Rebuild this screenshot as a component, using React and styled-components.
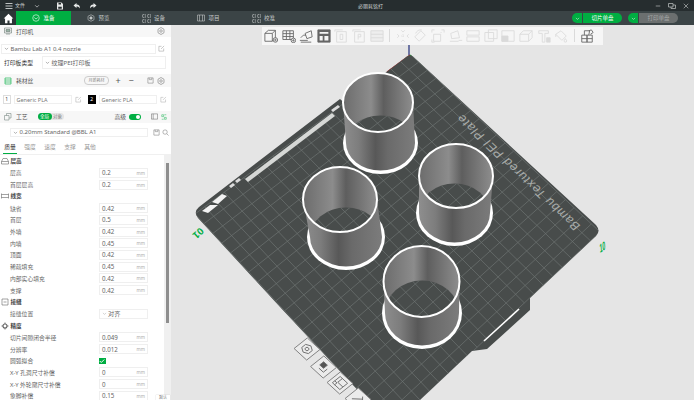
import React from "react";
import styled, { createGlobalStyle } from "styled-components";

const GlobalStyle = createGlobalStyle`
    html, body { margin: 0; padding: 0; background: #e5e5e5; }
    body { font-family: "Noto Sans", "Noto Sans CJK SC", sans-serif; }
    * { box-sizing: border-box; }
`;

// small icons
const Svg = ({ size = 8, vb = 16, children, ...rest }) => (
    <svg width={size} height={size} viewBox={`0 0 ${vb} ${vb}`} fill="none" stroke="currentColor" strokeWidth="1.2" {...rest}>{children}</svg>
);
const MenuIcon = () => <Svg size={8}><path d="M1 3h14M1 8h14M1 13h14" strokeWidth="1.6" /></Svg>;
const Chevron = ({ size = 6 }) => <Svg size={size}><path d="M3 6l5 5 5-5" strokeWidth="1.6" /></Svg>;
const SaveIcon = () => <Svg size={8}><path d="M2 1h9l3 3v11H2z" fill="currentColor" stroke="none" /><path d="M5 2h5v3H5zM4.500 9.500h7v4h-7z" fill="#262d2f" stroke="none" /></Svg>;
const UndoIcon = ({ flip }) => <Svg size={8} style={flip ? { transform: "scaleX(-1)" } : undefined}><path d="M7 2L1 7l6 5V9c3 0 5 1 7 4 0-5-2-8-7-8z" fill="currentColor" stroke="none" /></Svg>;
const HomeIcon = () => <Svg size={11}><path d="M8 1L1 8h2v7h3.500v-4h3v4H13V8h2z" fill="currentColor" stroke="none" /></Svg>;
const PrepareIcon = () => <Svg size={8}><circle cx="8" cy="8" r="6.500" /><path d="M4.500 7l3.500 3 3.500-3" /></Svg>;
const PreviewIcon = () => <Svg size={8}><path d="M8 1.500l6 3v7l-6 3-6-3v-7z" /><circle cx="8" cy="8" r="2.500" fill="currentColor" /></Svg>;
const DeviceIcon = () => <Svg size={9}><path d="M1 1h5v5H1zM10 1h5v5h-5zM1 10h5v5H1zM10 10h5v5h-5z" strokeDasharray="3 1" /></Svg>;
const ProjectIcon = () => <Svg size={8}><path d="M1 2h14v12H1zM5 2v12M11 2v12" /></Svg>;
const MinIcon = () => <Svg size={6}><path d="M2 8h12" strokeWidth="1.8" /></Svg>;
const RestoreIcon = () => <Svg size={8}><path d="M1 3h9v7H1zM6 10v3h9V6h-5" strokeWidth="1.5" /></Svg>;
const CloseIcon = () => <Svg size={6}><path d="M2 2l12 12M14 2L2 14" strokeWidth="1.8" /></Svg>;
const GearIcon = () => <Svg size={8}><path d="M8 1l6 3.500v7L8 15l-6-3.500v-7z" /><circle cx="8" cy="8" r="2.500" /></Svg>;
const EditIcon = () => <Svg size={7}><path d="M13 8v6H2V3h6" /><path d="M7 9l7-7" /></Svg>;
const PrinterIcon = () => <Svg size={8} stroke="#6a7a72"><path d="M1 2h14v10H1zM4 14h8" /><path d="M4 5h8v4H4z" fill="#9bb3a6" /></Svg>;
const SpoolIcon = () => <Svg size={8} stroke="#00ae42"><path d="M2 2h12v12H2z" /><path d="M2 6h12M2 10h12" /></Svg>;
const CubesIcon = () => <Svg size={8} stroke="#7b8a84"><path d="M1 5h9v9H1zM5 5V1h9v9h-4" /></Svg>;
const NoteIcon = () => <Svg size={7} stroke="#666"><path d="M1 2h14v12H1zM5 2v12" /></Svg>;
const CompareIcon = () => <Svg size={6} stroke="#00ae42"><path d="M2 2h5v5H2zM9 9h5v5H9zM9 2h5M2 14h5" /></Svg>;
const DiskIcon = () => <Svg size={7}><path d="M2 2h12v12H2zM5 2v4h6V2" /></Svg>;
const SearchIcon = () => <Svg size={7}><circle cx="7" cy="7" r="5" /><path d="M11 11l4 4" /></Svg>;
const LayerIcon = () => <Svg size={8}><path d="M1 14h14M1 9l3-6h8l3 6zM1 9v5M15 9v5" /></Svg>;
const WidthIcon = () => <Svg size={8}><path d="M1 5h14M1 11h14M1 3v10M15 3v10" /></Svg>;
const SeamIcon = () => <Svg size={8}><path d="M2 2h12v12H2zM5 8h6" /></Svg>;
const PrecisionIcon = () => <Svg size={8}><circle cx="8" cy="8" r="4" strokeWidth="2.200" /><path d="M8 1v3M8 12v3M1 8h3M12 8h3" strokeWidth="1.800" /></Svg>;

// toolbar glyphs on a 16 box
const plus = (x, y) => <g><circle cx={x} cy={y} r="2.600" fill="#f6f6f6" /><path d={`M${x - 1.500} ${y}h3M${x} ${y - 1.500}v3`} strokeWidth=".8" /></g>;
const toolGlyphs = {
    cube: <><path d="M1 5l4-3.500h8V10l-3.500 4H1zM1 5h8.500v9M9.500 5L13 1.500" />{plus(13, 12.500)}</>,
    grid: <><path d="M1 2h12v10H1zM1 5.300h12M1 8.600h12M5 2v10M9 2v10" />{plus(13, 13)}</>,
    arrange: <path d="M1 13h9M2 15h12M2 10l3-3h3M7 5l7-3 1 7-6 2z" />,
    layout: <><path d="M1 1h14v14H1z" fill="currentColor" /><path d="M3 3.500h10v2H3zM3 8h3.500v5H3zM8.500 8H13v5H8.500z" fill="#f6f6f6" stroke="none" /></>,
    zero: <><path d="M1 3V1h9M3 3h11v12H3z" /><path d="M7 6h3v6H7z" /></>,
    letterP: <><path d="M1 3V1h9M3 3h11v12H3z" /><path d="M7 12V6h3v3H7" /></>,
    stack: <path d="M1 2h14v12H1zM1 6h14M1 10h14" fill="currentColor" fillOpacity=".3" />,
    move: <><path d="M8 3.500l-2-2M8 3.500l2-2M8 12.500l-2 2M8 12.500l2 2M3.500 8l-2-2M3.500 8l-2 2M12.500 8l2-2M12.500 8l2 2" /><path d="M6 8h4M8 6v4" strokeDasharray="1 1" /></>,
    rotate: <><path d="M2 9l7-7 5 5-7 7zM3 5a7 7 0 0 1 7-4" /></>,
    scale: <><path d="M1 4V1h3M12 1h3v3M1 12v3h3M3 6h8v8H3zM11 4h1" /></>,
    flatten: <path d="M1 14h10M3 11l-1-6 8-3 2 8zM11 13h4" />,
    cut: <path d="M1 2h14v5H1zM1 9h14v5H1z" />,
    boolean: <path d="M1 4h10v10H1zM5 1h10v10H5z" />,
    subtract: <><path d="M1 2h14v12H1z" /><path d="M1 8h7v6H1z" fill="currentColor" /></>,
    box: <path d="M1 6l4-4h10v8l-4 4H1zM1 6h10v8M11 6l4-4" />,
    text: <><path d="M2 2h11v3H9v10H6V5H2z" /><path d="M11 10h4v5h-4z" fill="currentColor" /></>,
    bucket: <path d="M2 6l6-4 6 6-5 5zM2 6v3M13 11l1.500 2.500a1.500 1.500 0 1 1-3 0z" />,
    assembly: <path d="M2 7h6v8H2zM8 7h6v8H8zM2 11h12M5 7V2h6l-1 5M10 2l3-1 2 3-3 2" />,
};

const tools = [
    ["cube", 1], ["grid", 1], ["arrange", 1], ["layout", 1], ["zero"], ["letterP"], ["stack"], "sep",
    ["move"], ["rotate"], ["scale"], ["flatten"], ["cut"], ["boolean"], ["subtract"], ["box"], ["text"], ["bucket"], "sep", ["assembly", 1],
];

const tabs = [
    { name: "准备", icon: <PrepareIcon />, active: true },
    { name: "预览", icon: <PreviewIcon /> },
    { name: "设备", icon: <DeviceIcon /> },
    { name: "项目", icon: <ProjectIcon /> },
    { name: "校准", icon: <DeviceIcon /> },
];

const params = [
    { title: "层高", icon: <LayerIcon />, rows: [["层高", "0.2"], ["首层层高", "0.2"]] },
    {
        title: "线宽", icon: <WidthIcon />, rows: [["缺省", "0.42"], ["首层", "0.5"], ["外墙", "0.42"], ["内墙", "0.45"], ["顶面", "0.42"], ["稀疏填充", "0.45"], ["内部实心填充", "0.42"], ["支撑", "0.42"]],
    },
    { title: "接缝", icon: <SeamIcon />, rows: [["接缝位置", "对齐", "select"]] },
    {
        title: "精度", icon: <PrecisionIcon />, rows: [["切片间隙闭合半径", "0.049"], ["分辨率", "0.012"], ["圆弧拟合", "", "check"], ["X-Y 孔洞尺寸补偿", "0"], ["X-Y 外轮廓尺寸补偿", "0"], ["象脚补偿", "0.15"]],
    },
];

// plate geometry, page coordinates
const T = [410, 54], R = [600, 232], B = [392, 427], L = [195, 214];
const CELLS = 22;
const lerp = (a, b, t) => [a[0] + (b[0] - a[0]) * t, a[1] + (b[1] - a[1]) * t];

function gridLines() {
    const lines = [];
    for (let i = 0; i <= CELLS; i++) {
        const t = i / CELLS;
        const a = lerp(T, R, t), b = lerp(L, B, t);
        const c = lerp(T, L, t), d = lerp(R, B, t);
        lines.push(`M${a[0]} ${a[1]}L${b[0]} ${b[1]}`, `M${c[0]} ${c[1]}L${d[0]} ${d[1]}`);
    }
    return lines.join("");
}

const PLATE = "M407 56.500Q410 54 413 56.500L596 225Q601 231 596 236L530 298V310L487 349L472 351L420 400L392 427L367 400L280 307L198 218Q193 212 199 207L340 99L345 103.500Z";

const parts = [
    { id: "a", top: [378, 102.5, 35, 29.5], base: [380.5, 143, 37.5, 31] },
    { id: "c", top: [456, 176, 37, 32], base: [454.5, 213, 38.5, 33] },
    { id: "b", top: [340, 199.5, 37, 32.5], base: [346, 237, 39, 33] },
    { id: "d", top: [421.5, 281.5, 38, 35.5], base: [422, 313, 40, 36] },
];

function Cylinder({ top, base, id }) {
    const [tx, ty, trx, try_] = top;
    const [bx, by, brx, bry] = base;
    const rx = brx - 3, ry = bry - 3.5;
    return (
        <g>
            <ellipse cx={bx} cy={by} rx={brx} ry={bry} fill="#fff" />
            <path d={`M${tx - trx} ${ty}L${bx - rx} ${by}A${rx} ${ry} 0 0 0 ${bx + rx} ${by}L${tx + trx} ${ty}Z`} fill="url(#outerWall)" />
            <clipPath id={`inner-${id}`}><ellipse cx={tx} cy={ty} rx={trx} ry={try_} /></clipPath>
            <g clipPath={`url(#inner-${id})`}>
                <ellipse cx={tx} cy={ty} rx={trx} ry={try_} fill="url(#innerWall)" />
                <ellipse cx={bx} cy={by} rx={rx} ry={ry} fill="#484c4b" />
                <clipPath id={`floor-${id}`}><ellipse cx={bx} cy={by} rx={rx} ry={ry} /></clipPath>
                <path d={gridLines()} stroke="#6f7473" strokeWidth=".7" clipPath={`url(#floor-${id})`} />
            </g>
            <ellipse cx={tx} cy={ty} rx={trx} ry={try_} stroke="#fff" strokeWidth="2" fill="none" />
        </g>
    );
}

// little tilted buttons along the plate edge
function EdgeButton({ x, y, children }) {
    return (
        <g transform={`translate(${x} ${y}) matrix(.74 .68 -.78 .62 0 0)`}>
            <rect x="-8.500" y="-8.500" width="17" height="17" fill="#ebebeb" stroke="#808080" strokeWidth=".9" />
            <g stroke="#707070" strokeWidth=".9" fill="none">{children}</g>
        </g>
    );
}

function PlateScene() {
    return (
        <Scene viewBox="171 25 523 375">
            <defs>
                <linearGradient id="outerWall" x1="0" x2="1" y1="0" y2="0">
                    <stop offset="0" stopColor="#8e8e8e" />
                    <stop offset=".22" stopColor="#7d7d7d" />
                    <stop offset=".45" stopColor="#585858" />
                    <stop offset=".62" stopColor="#6a6a6a" />
                    <stop offset="1" stopColor="#7c7c7c" />
                </linearGradient>
                <linearGradient id="innerWall" x1="0" x2="1" y1="0" y2="0">
                    <stop offset="0" stopColor="#6c6c6c" />
                    <stop offset=".4" stopColor="#8c8c8c" />
                    <stop offset=".58" stopColor="#5e5e5e" />
                    <stop offset="1" stopColor="#8e8e8e" />
                </linearGradient>
                <clipPath id="plateClip"><path d={PLATE} /></clipPath>
            </defs>

            <path d="M409 55V40" stroke="#1e2a78" strokeWidth="1.200" />
            <path d="M410 55L387 72" stroke="#b01c1c" strokeWidth="1.200" />
            <path d="M410 55L430 74" stroke="#18b030" strokeWidth="1.200" />

            <path d={PLATE} fill="#484c4b" />
            <path d={gridLines()} stroke="#6f7473" strokeWidth=".7" clipPath="url(#plateClip)" />

            <path d="M245 179L332 113L335 116L248 182Z" fill="#d6d8d6" />
            <path d="M202 211L210 205L218 205L208 213Z" fill="#f2f2f2" />
            <path d="M212 202L222 194L227 196L218 204Z" fill="#f2f2f2" />
            <path d="M229 186l4-3 2 2-4 3zM235 181l4-3 2 2-4 3zM331 110l7-5 2 2-7 5z" fill="#dcdcdc" />
            <path d="M484 341L519 309" stroke="#fff" strokeWidth="1.600" fill="none" />

            <PlateLabel transform="matrix(-.72 -.68 .8 -.6 581 226)">Bambu Textured PEI Plate</PlateLabel>
            <AxisLabel transform="matrix(-.74 .66 -.66 -.74 200 227)">01</AxisLabel>
            <AxisLabel transform="matrix(.5 -.35 .1 1.200 600 253)">10</AxisLabel>

            {parts.map(p => <Cylinder key={p.id} {...p} />)}

            <EdgeButton x={307} y={349}>
                <path d="M0-5l4.500 2.500v5L0 5l-4.500-2.500v-5z" />
                <circle r="1.800" />
            </EdgeButton>
            <EdgeButton x={323.500} y={367}>
                <path d="M-4-4h5v5h-5z" fill="#555" />
                <path d="M4-1v5h-6" />
            </EdgeButton>
            <EdgeButton x={340} y={383}>
                <path d="M-5-5H5V5H-5zM-2-5v6h7M-5 2h3v3" />
            </EdgeButton>
            <EdgeButton x={358} y={399}>
                <path d="M-4 4L3-3M1-5l4 4" />
            </EdgeButton>
        </Scene>
    );
}

function App() {
    return (
        <Page>
            <GlobalStyle />
            <TitleBar>
                <TitleGroup>
                    <TitleIcon><MenuIcon /></TitleIcon>
                    <FileLabel>文件</FileLabel>
                    <TitleIcon $gap={9}><Chevron /></TitleIcon>
                    <TitleIcon $gap={16}><SaveIcon /></TitleIcon>
                    <TitleIcon $gap={9}><UndoIcon /></TitleIcon>
                    <TitleIcon $gap={8}><UndoIcon flip /></TitleIcon>
                </TitleGroup>
                <FileName>必丽耗铭打</FileName>
                <WindowButtons>
                    <MinIcon />
                    <RestoreIcon />
                    <CloseIcon />
                </WindowButtons>
            </TitleBar>

            <TabBar>
                <HomeButton><HomeIcon /></HomeButton>
                {tabs.map(t => <Tab key={t.name} $active={t.active}>{t.icon}{t.name}</Tab>)}
                <TabSpacer />
                <ActionButton>
                    <ActionArrow><Chevron size={5} /></ActionArrow>
                    <ActionLabel>切片单盘</ActionLabel>
                </ActionButton>
                <ActionButton>
                    <ActionArrow><Chevron size={5} /></ActionArrow>
                    <ActionLabel $disabled>打印单盘</ActionLabel>
                </ActionButton>
            </TabBar>

            <Workspace>
                <Sidebar>
                    <SectionHeader>
                        <PrinterIcon />
                        <SectionTitle>打印机</SectionTitle>
                        <HeaderSpacer />
                        <GearIcon />
                    </SectionHeader>
                    <PrinterBody>
                        <FieldRow>
                            <SelectBox $width={155}><Chevron size={5} />Bambu Lab A1 0.4 nozzle</SelectBox>
                            <EditIcon />
                        </FieldRow>
                        <PlateRow>
                            <PlateTypeLabel>打印板类型</PlateTypeLabel>
                            <SelectBox $width={124} $height={13}><Chevron size={5} />纹理PEI打印板</SelectBox>
                        </PlateRow>
                    </PrinterBody>

                    <SectionHeader $height={13}>
                        <SpoolIcon />
                        <SectionTitle>耗材丝</SectionTitle>
                        <HeaderSpacer />
                        <SyncPill>月新耗材</SyncPill>
                        <HeaderGlyph $after={2}>+</HeaderGlyph>
                        <HeaderGlyph $after={9}>−</HeaderGlyph>
                        <DiskIcon />
                        <GearIcon />
                    </SectionHeader>
                    <FilamentRow>
                        <Filament>
                            <Swatch>1</Swatch>
                            <FilamentName>Generic PLA</FilamentName>
                            <EditIcon />
                        </Filament>
                        <Filament>
                            <Swatch $dark>2</Swatch>
                            <FilamentName>Generic PLA</FilamentName>
                            <EditIcon />
                        </Filament>
                    </FilamentRow>

                    <SectionHeader $height={11.500} $tight>
                        <CubesIcon />
                        <SectionTitle>工艺</SectionTitle>
                        <ScopeSwitch>
                            <ScopeOption $on>全局</ScopeOption>
                            <ScopeOption>对象</ScopeOption>
                        </ScopeSwitch>
                        <HeaderSpacer />
                        <AdvancedLabel>高级</AdvancedLabel>
                        <Toggle />
                        <NoteIcon />
                        <CompareIcon />
                    </SectionHeader>
                    <ProcessRow>
                        <SelectBox $width={138} $after={3}><Chevron size={5} />0.20mm Standard @BBL A1</SelectBox>
                        <DiskIcon />
                        <SearchIcon />
                    </ProcessRow>
                    <ParamTabs>
                        <ParamTab $active>质量</ParamTab>
                        <ParamTab>强度</ParamTab>
                        <ParamTab>速度</ParamTab>
                        <ParamTab>支撑</ParamTab>
                        <ParamTab>其他</ParamTab>
                    </ParamTabs>
                    <ParamArea>
                        <ParamList>
                            {params.map(group => (
                                <React.Fragment key={group.title}>
                                    <GroupHeader>{group.icon}<span>{group.title}</span></GroupHeader>
                                    {group.rows.map(([label, value, kind]) => (
                                        <ParamRow key={label}>
                                            <ParamLabel>{label}</ParamLabel>
                                            {kind === "check" ? (
                                                <CheckBox><Svg size={6} stroke="#fff"><path d="M2 8l4 4 8-8" strokeWidth="2.500" /></Svg></CheckBox>
                                            ) : kind === "select" ? (
                                                <ParamInput><Chevron size={5} /><ParamValue>{value}</ParamValue></ParamInput>
                                            ) : (
                                                <ParamInput><ParamValue>{value}</ParamValue><ParamUnit>mm</ParamUnit></ParamInput>
                                            )}
                                        </ParamRow>
                                    ))}
                                </React.Fragment>
                            ))}
                        </ParamList>
                        <ScrollTrack><ScrollThumb /></ScrollTrack>
                        <ResetTag>默认</ResetTag>
                    </ParamArea>
                </Sidebar>

                <Canvas>
                    <PlateScene />
                    <Toolbar>
                        {tools.map((tool, i) => tool === "sep" ? <ToolSep key={i} /> : (
                            <ToolIcon key={i} $on={tool[1]} viewBox="0 0 16 16">{toolGlyphs[tool[0]]}</ToolIcon>
                        ))}
                    </Toolbar>
                </Canvas>
            </Workspace>
        </Page>
    );
}

export default App;

const Page = styled.div`
    width: 694px;
    height: 400px;
    overflow: hidden;
    display: flex;
    flex-direction: column;
`;

const TitleBar = styled.div`
    height: 11px;
    flex: none;
    position: relative;
    display: flex;
    align-items: center;
    justify-content: space-between;
    padding: 0 5px;
    background: #262d2f;
    color: #e6e8e8;
`;

const TitleGroup = styled.div`
    display: flex;
    align-items: center;
`;

const TitleIcon = styled.span`
    display: flex;
    margin-left: ${({ $gap }) => $gap || 0}px;
`;

const FileLabel = styled.span`
    margin-left: 2px;
    font-size: 5px;
    line-height: 11px;
    color: #c9cdcd;
`;

const FileName = styled.span`
    position: absolute;
    left: 358px;
    font-size: 5px;
    color: #c9cdcd;
`;

const WindowButtons = styled.div`
    display: flex;
    align-items: center;
    gap: 7px;
    color: #b9bdbd;
`;

const TabBar = styled.div`
    height: 14px;
    flex: none;
    display: flex;
    align-items: stretch;
    background: #3b4446;
    color: #c4c8c8;
`;

const HomeButton = styled.div`
    width: 16px;
    display: flex;
    align-items: center;
    justify-content: center;
    background: #2c3436;
    color: #fff;
`;

const Tab = styled.div`
    width: 55px;
    display: flex;
    align-items: center;
    justify-content: center;
    gap: 3px;
    font-size: 5.500px;
    background: ${({ $active }) => $active ? "#00ae42" : "transparent"};
    color: ${({ $active }) => $active ? "#fff" : "#c4c8c8"};
`;

const TabSpacer = styled.div`
    flex: 1;
`;

const ActionButton = styled.div`
    width: 50px;
    height: 10px;
    margin: auto 16px auto -10px;
    display: flex;
    gap: 1px;
`;

const ActionArrow = styled.div`
    width: 10px;
    display: flex;
    align-items: center;
    justify-content: center;
    border-radius: 5px 0 0 5px;
    background: #00ae42;
    color: #fff;
`;

const ActionLabel = styled.div`
    flex: 1;
    display: flex;
    align-items: center;
    justify-content: center;
    font-size: 5.500px;
    border-radius: 0 5px 5px 0;
    background: ${({ $disabled }) => $disabled ? "#6b6f6f" : "#00ae42"};
    color: ${({ $disabled }) => $disabled ? "#a5a8a8" : "#fff"};
`;

const Workspace = styled.div`
    flex: 1;
    min-height: 0;
    display: flex;
`;

const Sidebar = styled.div`
    width: 171px;
    flex: none;
    display: flex;
    flex-direction: column;
    background: #fff;
    color: #555;
`;

const SectionHeader = styled.div`
    height: ${({ $height }) => $height || 12}px;
    flex: none;
    display: flex;
    align-items: center;
    gap: 3px;
    padding: 0 ${({ $tight }) => $tight ? 4 : 6}px 0 4px;
    background: #f7f7f7;
    color: #777;
`;

const SectionTitle = styled.span`
    margin-left: 1px;
    font-size: 5.800px;
    color: #555;
`;

const HeaderSpacer = styled.div`
    flex: 1;
`;

const HeaderGlyph = styled.span`
    width: 8px;
    margin-right: ${({ $after }) => $after}px;
    text-align: center;
    font-size: 9px;
    line-height: 9px;
    color: #555;
`;

const SyncPill = styled.span`
    width: 25px;
    margin-right: 2px;
    text-align: center;
    font-size: 4px;
    line-height: 7px;
    border: 1px solid #ccc;
    border-radius: 4px;
    color: #888;
`;

const PrinterBody = styled.div`
    height: 37px;
    flex: none;
    padding: 7px 0 0 1px;
    color: #999;
`;

const FieldRow = styled.div`
    display: flex;
    align-items: center;
    gap: 2px;
`;

const PlateRow = styled.div`
    margin-top: 2px;
    padding-left: 3px;
    display: flex;
    align-items: center;
`;

const PlateTypeLabel = styled.span`
    width: 38px;
    font-size: 5.800px;
    color: #333;
`;

const SelectBox = styled.div`
    width: ${({ $width }) => $width}px;
    height: ${({ $height }) => $height || 9.500}px;
    margin-right: ${({ $after }) => $after || 0}px;
    flex: none;
    display: flex;
    align-items: center;
    gap: 1.500px;
    padding-left: 2px;
    font-size: 6px;
    border: 1px solid #efefef;
    color: #666;
`;

const FilamentRow = styled.div`
    height: 24px;
    flex: none;
    display: flex;
    padding: 7.500px 0 0 3px;
    gap: 6px;
    color: #aaa;
`;

const Filament = styled.div`
    width: 79px;
    height: 9.500px;
    display: flex;
    align-items: center;
    gap: 3px;
`;

const Swatch = styled.div`
    width: 7.500px;
    height: 9.500px;
    flex: none;
    display: flex;
    align-items: center;
    justify-content: center;
    font-size: 5px;
    border: 1px solid ${({ $dark }) => $dark ? "#000" : "#ddd"};
    background: ${({ $dark }) => $dark ? "#000" : "#fff"};
    color: ${({ $dark }) => $dark ? "#fff" : "#444"};
`;

const FilamentName = styled.div`
    width: 60px;
    height: 9.500px;
    padding-left: 2px;
    font-size: 5.500px;
    line-height: 8px;
    border: 1px solid #efefef;
    color: #777;
`;

const ScopeSwitch = styled.div`
    margin-left: 7px;
    display: flex;
    border-radius: 4px;
    background: #e4e4e4;
`;

const ScopeOption = styled.span`
    width: ${({ $on }) => $on ? 14 : 12}px;
    text-align: center;
    font-size: 4.500px;
    line-height: 7px;
    border-radius: 4px;
    background: ${({ $on }) => $on ? "#00ae42" : "transparent"};
    color: ${({ $on }) => $on ? "#fff" : "#888"};
`;

const AdvancedLabel = styled.span`
    font-size: 5.800px;
    color: #555;
`;

const Toggle = styled.div`
    position: relative;
    width: 12px;
    height: 6.500px;
    margin-right: 7px;
    border-radius: 4px;
    background: #00ae42;

    &::after {
        content: "";
        position: absolute;
        right: 1px;
        top: 1px;
        width: 4.500px;
        height: 4.500px;
        border-radius: 50%;
        background: #fff;
    }
`;

const ProcessRow = styled.div`
    height: 16.500px;
    flex: none;
    display: flex;
    align-items: center;
    gap: 2px;
    padding: 3px 0 0 10px;
    color: #777;
`;

const ParamTabs = styled.div`
    height: 15.500px;
    flex: none;
    display: flex;
    gap: 6px;
    padding: 4px 0 0 3px;
    border-bottom: 1px solid #f0f0f0;
`;

const ParamTab = styled.div`
    width: 14px;
    height: 10.500px;
    text-align: center;
    font-size: 5.800px;
    line-height: 9px;
    border-bottom: 1px solid ${({ $active }) => $active ? "#00ae42" : "transparent"};
    color: ${({ $active }) => $active ? "#333" : "#999"};
`;

const ParamArea = styled.div`
    position: relative;
    flex: 1;
    min-height: 0;
    display: flex;
    overflow: hidden;
`;

const ParamList = styled.div`
    width: 164px;
    flex: none;
    padding-top: .500px;
`;

const GroupHeader = styled.div`
    height: 12px;
    display: flex;
    align-items: center;
    gap: 1.500px;
    padding-left: 1px;
    font-size: 5.600px;
    font-weight: 700;
    color: #444;

    & > svg {
        color: #666;
    }
`;

const ParamRow = styled.div`
    height: 11.700px;
    display: flex;
    align-items: center;
    padding-left: 10px;
`;

const ParamLabel = styled.span`
    width: 89px;
    font-size: 5.800px;
    white-space: nowrap;
    color: #666;
`;

const ParamInput = styled.div`
    width: 49px;
    height: 10px;
    display: flex;
    align-items: center;
    gap: 1px;
    padding: 0 2px;
    border: 1px solid #efefef;
    color: #aaa;
`;

const ParamValue = styled.span`
    flex: 1;
    font-size: 6.200px;
    color: #666;
`;

const ParamUnit = styled.span`
    font-size: 4.500px;
    color: #aaa;
`;

const CheckBox = styled.div`
    width: 6.500px;
    height: 6.500px;
    display: flex;
    align-items: center;
    justify-content: center;
    background: #00ae42;
`;

const ScrollTrack = styled.div`
    flex: 1;
    padding: 8px 2px 0;
    background: #f0f0f0;
`;

const ScrollThumb = styled.div`
    height: 160px;
    background: #8e8e8e;
`;

const ResetTag = styled.span`
    position: absolute;
    right: 1px;
    bottom: 0;
    height: 5px;
    padding: 0 3px;
    font-size: 4px;
    line-height: 5px;
    background: #fff;
    color: #777;
    box-shadow: 0 0 1px #bbb;
`;

const Canvas = styled.div`
    position: relative;
    flex: 1;
    background: #e5e5e5;
`;

const Scene = styled.svg`
    position: absolute;
    inset: 0;
    width: 523px;
    height: 375px;
`;

const PlateLabel = styled.text`
    font-family: "Liberation Sans", sans-serif;
    font-size: 12.500px;
    letter-spacing: .800px;
    fill: #a9acaa;
`;

const AxisLabel = styled.text`
    font-family: "Liberation Sans", sans-serif;
    font-size: 10px;
    font-weight: 700;
    fill: #00ae42;
`;

const Toolbar = styled.div`
    position: absolute;
    left: 91px;
    top: 1.500px;
    width: 341px;
    height: 18px;
    display: flex;
    align-items: center;
    gap: 3.600px;
    padding-left: 2px;
    background: #f6f6f6;
`;

const ToolIcon = styled.svg`
    width: 14px;
    height: 14px;
    flex: none;
    fill: none;
    stroke: currentColor;
    stroke-width: 1;
    color: ${({ $on }) => $on ? "#666" : "#dadada"};
`;

const ToolSep = styled.div`
    width: 1px;
    height: 13px;
    flex: none;
    margin: 0 2px;
    background: #dadada;
`;
